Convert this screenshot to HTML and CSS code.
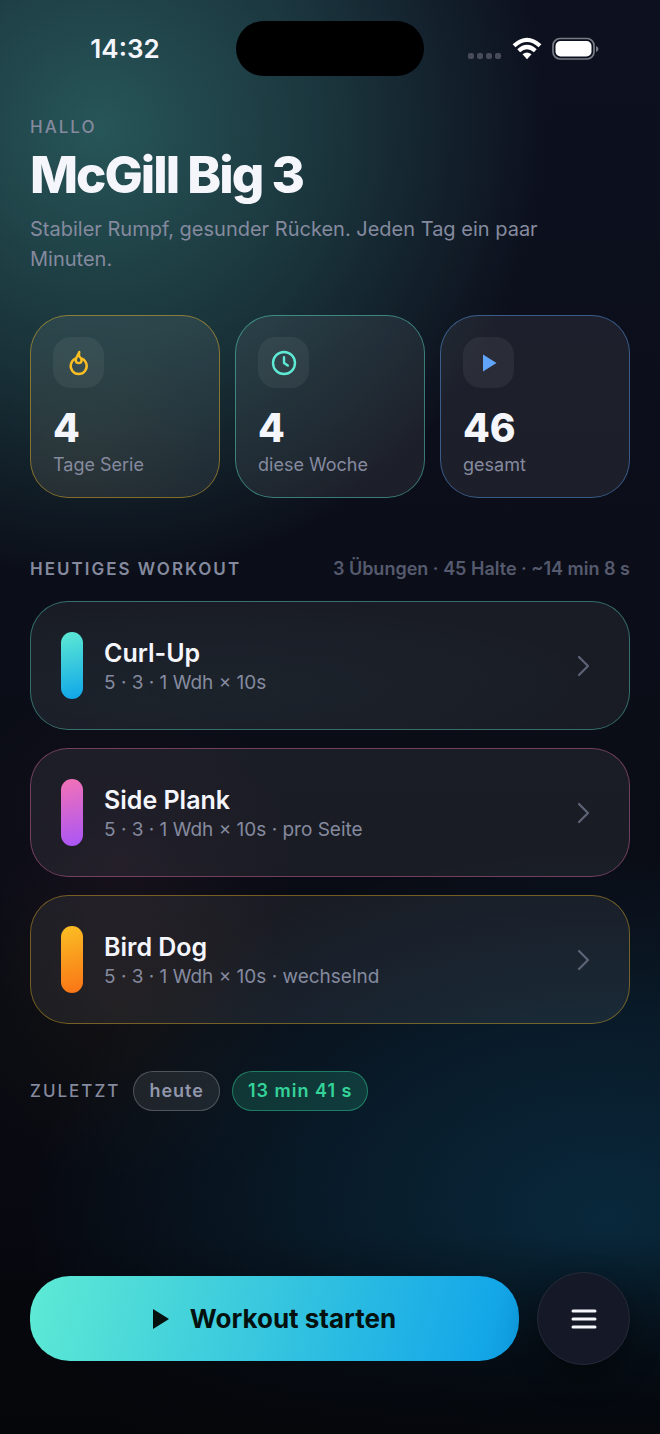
FILE: index.html
```html
<!DOCTYPE html>
<html lang="de">
<head>
<meta charset="utf-8">
<meta name="viewport" content="width=device-width, initial-scale=1">
<title>McGill Big 3</title>
<link rel="stylesheet" href="styles.css">
</head>
<body>
<div class="app">
  <div class="status">
    <time class="status-time">14:32</time>
    <div class="island"></div>
    <div class="status-icons">
      <svg width="34" height="24" viewBox="0 0 34 24" fill="#474c58" aria-hidden="true"><rect x="0" y="16" width="6" height="6" rx="2"/><rect x="9" y="16" width="6" height="6" rx="2"/><rect x="18" y="16" width="6" height="6" rx="2"/><rect x="27" y="16" width="6" height="6" rx="2"/></svg>
      <svg width="30" height="24" viewBox="0 0 30 24" aria-hidden="true"><g fill="none" stroke="#fff" stroke-width="4.2"><path d="M2 8.800Q15-3 28 8.800"/><path d="M6.700 13.700Q15 6.300 23.300 13.700"/></g><path fill="#fff" d="M10.500 17.300Q15 13.700 19.500 17.300L15 22.300Z"/></svg>
      <svg width="47" height="24" viewBox="0 0 47 24" aria-hidden="true"><rect x="1" y="1.500" width="41" height="20.500" rx="7" fill="none" stroke="#777b84" stroke-width="1.700"/><rect x="3.500" y="4" width="36" height="15.500" rx="5" fill="#fff"/><path d="M44 9q2.500 1 2.500 3t-2.500 3z" fill="#777b84"/></svg>
    </div>
  </div>

  <header class="intro">
    <p class="eyebrow">HALLO</p>
    <h1 class="title">McGill Big 3</h1>
    <p class="lead">Stabiler Rumpf, gesunder Rücken. Jeden Tag ein paar Minuten.</p>
  </header>

  <section class="stats" aria-label="Statistik">
    <div class="stat stat-amber">
      <span class="stat-icon"><svg width="30" height="30" viewBox="0 0 30 30" fill="none" stroke="#fbbf24" stroke-width="2.400" stroke-linecap="round" stroke-linejoin="round" aria-hidden="true"><path d="M15.200 4C14.400 7 11.800 9 11.800 12.200a2.900 2.900 0 0 0 5.800 0c0-2-1.600-2.700-2.600-4.200z"/><path d="M11.500 10.700a8 8 0 1 0 6.400 0"/></svg></span>
      <strong class="stat-value">4</strong>
      <span class="stat-label">Tage Serie</span>
    </div>
    <div class="stat stat-teal">
      <span class="stat-icon"><svg width="30" height="30" viewBox="0 0 30 30" fill="none" stroke="#5eead4" stroke-width="2.400" stroke-linecap="round" stroke-linejoin="round" aria-hidden="true"><circle cx="15" cy="15" r="11"/><path d="M15 9.200V15l3.800 2.600"/></svg></span>
      <strong class="stat-value">4</strong>
      <span class="stat-label">diese Woche</span>
    </div>
    <div class="stat stat-blue">
      <span class="stat-icon"><svg width="30" height="30" viewBox="0 0 30 30" fill="#60a5fa" aria-hidden="true"><path d="M9 6.500v17L22.500 15z"/></svg></span>
      <strong class="stat-value">46</strong>
      <span class="stat-label">gesamt</span>
    </div>
  </section>

  <section class="workout">
    <div class="section-head">
      <h2 class="section-title">HEUTIGES WORKOUT</h2>
      <span class="section-meta">3 Übungen · 45 Halte · ~14 min 8 s</span>
    </div>
    <div class="exercises">
      <button class="exercise exercise-teal" type="button">
        <span class="bar"></span>
        <span class="exercise-text"><span class="exercise-name">Curl-Up</span><span class="exercise-detail">5 · 3 · 1 Wdh × 10s</span></span>
        <svg class="chevron" width="14" height="24" viewBox="0 0 14 24" aria-hidden="true"><path d="M2 3l9 9-9 9"/></svg>
      </button>
      <button class="exercise exercise-pink" type="button">
        <span class="bar"></span>
        <span class="exercise-text"><span class="exercise-name">Side Plank</span><span class="exercise-detail">5 · 3 · 1 Wdh × 10s · pro Seite</span></span>
        <svg class="chevron" width="14" height="24" viewBox="0 0 14 24" aria-hidden="true"><path d="M2 3l9 9-9 9"/></svg>
      </button>
      <button class="exercise exercise-amber" type="button">
        <span class="bar"></span>
        <span class="exercise-text"><span class="exercise-name">Bird Dog</span><span class="exercise-detail">5 · 3 · 1 Wdh × 10s · wechselnd</span></span>
        <svg class="chevron" width="14" height="24" viewBox="0 0 14 24" aria-hidden="true"><path d="M2 3l9 9-9 9"/></svg>
      </button>
    </div>
  </section>

  <section class="recent">
    <h2 class="recent-title">ZULETZT</h2>
    <div class="chips"><span class="chip">heute</span><span class="chip chip-green">13 min 41 s</span></div>
  </section>

  <footer class="actions">
    <button class="start" type="button">
      <svg width="16" height="20" viewBox="0 0 16 20" fill="#04110f" aria-hidden="true"><path d="M0 0v20l16-10z"/></svg>
      Workout starten
    </button>
    <button class="menu" type="button" aria-label="Menü">
      <svg width="26" height="22" viewBox="0 0 26 22" fill="none" stroke="#f5f6fc" stroke-width="3" stroke-linecap="round" aria-hidden="true"><path d="M2 3h22M2 11h22M2 19h22"/></svg>
    </button>
  </footer>
</div>
</body>
</html>
```
FILE: styles.css
```css
* { box-sizing: border-box; }

body {
  margin: 0;
  background: #06070d;
  color: #f5f6fc;
  font-family: Inter, "Liberation Sans", sans-serif;
}

h1, h2, p { margin: 0; }

button {
  font: inherit;
  color: inherit;
  cursor: pointer;
}

svg { display: block; flex: none; }

.app {
  display: flex;
  flex-direction: column;
  min-height: 100vh;
  padding: 0 30px 69px;
  background:
    linear-gradient(to top, rgba(5, 6, 10, 0.9) 0, rgba(5, 6, 10, 0.7) 70px, rgba(5, 6, 10, 0) 200px),
    radial-gradient(circle at 15% 9%, rgba(94, 234, 212, 0.32) 0, rgba(94, 234, 212, 0.17) 230px, rgba(94, 234, 212, 0) 450px),
    radial-gradient(ellipse 580px 370px at 92% 85%, rgba(14, 165, 233, 0.2) 0, rgba(14, 165, 233, 0.11) 50%, rgba(14, 165, 233, 0) 100%),
    radial-gradient(circle at 18% 60%, rgba(236, 72, 153, 0.04) 0, rgba(236, 72, 153, 0) 180px),
    radial-gradient(circle at 18% 70%, rgba(251, 191, 36, 0.04) 0, rgba(251, 191, 36, 0) 180px),
    linear-gradient(#0d101f, #0b0e18 45%, #06070d);
}

.status {
  display: grid;
  grid-template-columns: 1fr 188px 1fr;
  align-items: center;
  padding-top: 21px;
}

.status-time {
  justify-self: center;
  padding-right: 16px;
  font-size: 26px;
  line-height: 32px;
  font-weight: 600;
}

.island {
  height: 55px;
  border-radius: 28px;
  background: #000;
}

.status-icons {
  display: flex;
  justify-content: flex-end;
  align-items: center;
  gap: 10px;
  padding-right: 31px;
}

.intro { padding-top: 40px; }

.eyebrow,
.recent-title,
.section-title {
  color: #858a9f;
  font-size: 17px;
  line-height: 22px;
  font-weight: 500;
  letter-spacing: 2px;
}

.title {
  padding-top: 6px;
  font-size: 51px;
  line-height: 61px;
  font-weight: 800;
  letter-spacing: -2px;
}

.lead {
  padding: 9px 30px 0 0;
  color: #858a9f;
  font-size: 20px;
  line-height: 30px;
}

.stats {
  display: grid;
  grid-template-columns: repeat(3, 1fr);
  gap: 15px;
  padding-top: 41px;
}

.stat {
  display: flex;
  flex-direction: column;
  align-items: flex-start;
  padding: 21px 22px 20px;
  border: 1px solid;
  border-radius: 38px;
}

.stat-icon {
  display: grid;
  place-items: center;
  width: 51px;
  height: 51px;
  border-radius: 18px;
  background: rgba(255, 255, 255, 0.06);
}

.stat-value {
  padding-top: 17px;
  font-size: 39px;
  line-height: 46px;
  font-weight: 800;
}

.stat-label {
  padding-top: 2px;
  color: #858a9f;
  font-size: 18px;
  line-height: 24px;
}

.stat-amber {
  border-color: rgba(251, 191, 36, 0.45);
  background: radial-gradient(circle at 25% 75%, rgba(251, 191, 36, 0.03), transparent 65%), rgba(255, 255, 255, 0.07);
}

.stat-teal {
  border-color: rgba(94, 234, 212, 0.45);
  background: rgba(255, 255, 255, 0.07);
}

.stat-blue {
  border-color: rgba(96, 165, 250, 0.45);
  background: rgba(255, 255, 255, 0.07);
}

.workout { padding-top: 59px; }

.section-head {
  display: flex;
  justify-content: space-between;
  align-items: center;
  padding-bottom: 20px;
}

.section-title { font-weight: 600; }

.section-meta {
  color: #565a6e;
  font-size: 18px;
  line-height: 24px;
  font-weight: 600;
}

.exercises {
  display: grid;
  gap: 18px;
}

.exercise {
  display: flex;
  align-items: center;
  gap: 21px;
  width: 100%;
  padding: 30px 38px 30px 30px;
  border: 1px solid;
  border-radius: 38px;
  text-align: left;
}

.bar {
  flex: none;
  width: 22px;
  height: 67px;
  border-radius: 11px;
}

.exercise-text {
  display: flex;
  flex: 1;
  flex-direction: column;
  padding-top: 3px;
}

.exercise-name {
  font-size: 25px;
  line-height: 31px;
  font-weight: 600;
}

.exercise-detail {
  color: #858a9f;
  font-size: 19px;
  line-height: 28px;
}

.chevron {
  fill: none;
  stroke: #5f6377;
  stroke-width: 2.2;
  stroke-linecap: round;
  stroke-linejoin: round;
}

.exercise-teal {
  border-color: rgba(94, 234, 212, 0.4);
  background: radial-gradient(ellipse at 30% 70%, rgba(94, 234, 212, 0.04), transparent 70%), rgba(255, 255, 255, 0.06);
}

.exercise-teal .bar { background: linear-gradient(165deg, #5eead4, #0ea5e9); }

.exercise-pink {
  border-color: rgba(244, 114, 182, 0.4);
  background: rgba(255, 255, 255, 0.065);
}

.exercise-pink .bar { background: linear-gradient(165deg, #f472b6, #a855f7); }

.exercise-amber {
  border-color: rgba(251, 191, 36, 0.4);
  background: rgba(255, 255, 255, 0.065);
}

.exercise-amber .bar { background: linear-gradient(165deg, #fbbf24, #f97316); }

.recent {
  display: flex;
  align-items: center;
  gap: 13px;
  padding-top: 47px;
}

.chips {
  display: flex;
  gap: 12px;
}

.chip {
  padding: 7px 15px;
  border: 1px solid rgba(255, 255, 255, 0.22);
  border-radius: 20px;
  background: rgba(255, 255, 255, 0.08);
  color: #9297ac;
  font-size: 18px;
  line-height: 24px;
  font-weight: 600;
  letter-spacing: 1px;
}

.chip-green {
  border-color: rgba(52, 211, 153, 0.45);
  background: rgba(52, 211, 153, 0.18);
  color: #34d399;
}

.actions {
  display: flex;
  align-items: center;
  gap: 18px;
  margin-top: auto;
  padding-top: 40px;
}

.start {
  display: flex;
  flex: 1;
  justify-content: center;
  align-items: center;
  gap: 21px;
  padding: 26px;
  border: 0;
  border-radius: 40px;
  background: linear-gradient(105deg, #5eead4, #14a7e8 92%, #0e98dc);
  color: #04110f;
  font-size: 26px;
  line-height: 33px;
  font-weight: 700;
}

.menu {
  display: grid;
  flex: none;
  place-items: center;
  width: 93px;
  height: 93px;
  padding: 0;
  border: 1px solid #262a3a;
  border-radius: 50%;
  background: #141827;
  box-shadow: 0 12px 30px rgba(0, 0, 0, 0.4);
}
```
